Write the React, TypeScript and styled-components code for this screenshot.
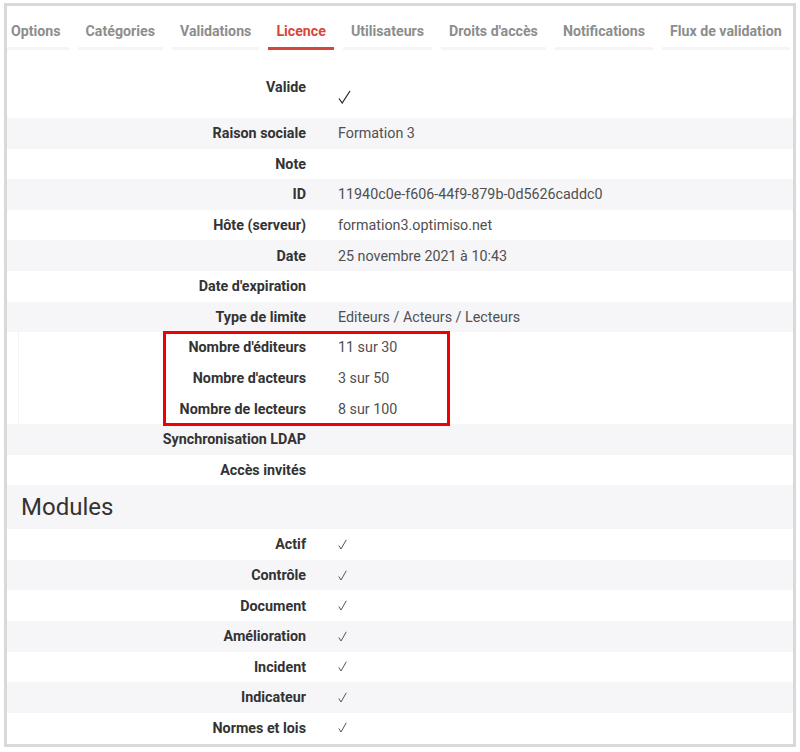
import React from "react";
import styled, { createGlobalStyle } from "styled-components";

const GlobalStyle = createGlobalStyle`
  html, body {
    margin: 0;
    padding: 0;
    background: #fff;
    font-family: Roboto, "Liberation Sans", Arial, sans-serif;
  }
`;

const Frame = styled.div`
  box-sizing: border-box;
  margin: 3px 4px 0 4px;
  width: 792px;
  height: 744px;
  border: 3px solid #d9d9d9;
  background: #fff;
  overflow: hidden;
`;

const TabBar = styled.div`
  display: flex;
  gap: 9px;
  height: 44px;
`;

const Tab = styled.div<{ active?: boolean; first?: boolean }>`
  box-sizing: border-box;
  padding: 16px 8px 7px ${(p) => (p.first ? "4px" : "8px")};
  line-height: 18px;
  font-size: 14.2px;
  font-weight: 700;
  white-space: nowrap;
  color: ${(p) => (p.active ? "#d8463b" : "#8d8d8d")};
  border-bottom: 3px solid ${(p) => (p.active ? "#d8463b" : "#f5f5f5")};
`;

const Table = styled.div`
  margin-top: 18px;
`;

const Row = styled.div<{ striped?: boolean; labelWidth?: number; tall?: boolean }>`
  display: grid;
  grid-template-columns: ${(p) => p.labelWidth ?? 315}px 1fr;
  height: ${(p) => (p.tall ? "50px" : "30.6px")};
  align-items: ${(p) => (p.tall ? "start" : "center")};
  background: ${(p) => (p.striped ? "#f6f6f8" : "#fff")};
`;

const Label = styled.div<{ tall?: boolean }>`
  padding: ${(p) => (p.tall ? "10px" : "0")} 16px 0 0;
  text-align: right;
  font-size: 14.3px;
  line-height: 18px;
  font-weight: 700;
  color: #333;
  white-space: nowrap;
`;

const Value = styled.div<{ tall?: boolean }>`
  padding: ${(p) => (p.tall ? "22px" : "0")} 0 0 16px;
  font-size: 14.3px;
  line-height: 18px;
  color: #505050;
  white-space: nowrap;
  display: flex;
  align-items: center;
`;

const Group = styled.div`
  position: relative;
  margin-left: 11px;
  border-left: 1px solid #f3f3f3;
`;

const Highlight = styled.div`
  position: absolute;
  left: 144px;
  top: -1px;
  width: 287px;
  height: 95px;
  box-sizing: border-box;
  border: 3px solid #f00000;
  pointer-events: none;
`;

const SectionTitle = styled.div`
  height: 44px;
  display: flex;
  align-items: center;
  padding-left: 14px;
  font-size: 24px;
  color: #333;
  background: #f6f6f8;
`;

const Check = ({ big }: { big?: boolean }) =>
  big ? (
    <svg width="13" height="14" viewBox="0 0 13 14">
      <path d="M1 8.5 L4.2 13 L12 1" fill="none" stroke="#222" strokeWidth="1.2" />
    </svg>
  ) : (
    <svg width="9" height="11" viewBox="0 0 9 11">
      <path d="M0.8 6.5 L3 10 L8.3 0.8" fill="none" stroke="#555" strokeWidth="1" />
    </svg>
  );

const tabs = [
  "Options",
  "Catégories",
  "Validations",
  "Licence",
  "Utilisateurs",
  "Droits d'accès",
  "Notifications",
  "Flux de validation",
];

const licence: [string, string][] = [
  ["Raison sociale", "Formation 3"],
  ["Note", ""],
  ["ID", "11940c0e-f606-44f9-879b-0d5626caddc0"],
  ["Hôte (serveur)", "formation3.optimiso.net"],
  ["Date", "25 novembre 2021 à 10:43"],
  ["Date d'expiration", ""],
  ["Type de limite", "Editeurs / Acteurs / Lecteurs"],
];

const counts: [string, string][] = [
  ["Nombre d'éditeurs", "11 sur 30"],
  ["Nombre d'acteurs", "3 sur 50"],
  ["Nombre de lecteurs", "8 sur 100"],
];

const modules = [
  "Actif",
  "Contrôle",
  "Document",
  "Amélioration",
  "Incident",
  "Indicateur",
  "Normes et lois",
];

export default function App() {
  return (
    <>
      <GlobalStyle />
      <Frame>
        <TabBar>
          {tabs.map((t, i) => (
            <Tab key={t} first={i === 0} active={t === "Licence"}>
              {t}
            </Tab>
          ))}
        </TabBar>
        <Table>
          <Row tall>
            <Label tall>Valide</Label>
            <Value tall>
              <Check big />
            </Value>
          </Row>
          {licence.map(([label, value], i) => (
            <Row key={label} striped={i % 2 === 0}>
              <Label>{label}</Label>
              <Value>{value}</Value>
            </Row>
          ))}
          <Group>
            {counts.map(([label, value]) => (
              <Row key={label} labelWidth={303}>
                <Label>{label}</Label>
                <Value>{value}</Value>
              </Row>
            ))}
            <Highlight />
          </Group>
          <Row striped>
            <Label>Synchronisation LDAP</Label>
            <Value />
          </Row>
          <Row>
            <Label>Accès invités</Label>
            <Value />
          </Row>
          <SectionTitle>Modules</SectionTitle>
          {modules.map((m, i) => (
            <Row key={m} striped={i % 2 === 1}>
              <Label>{m}</Label>
              <Value>
                <Check />
              </Value>
            </Row>
          ))}
        </Table>
      </Frame>
    </>
  );
}
